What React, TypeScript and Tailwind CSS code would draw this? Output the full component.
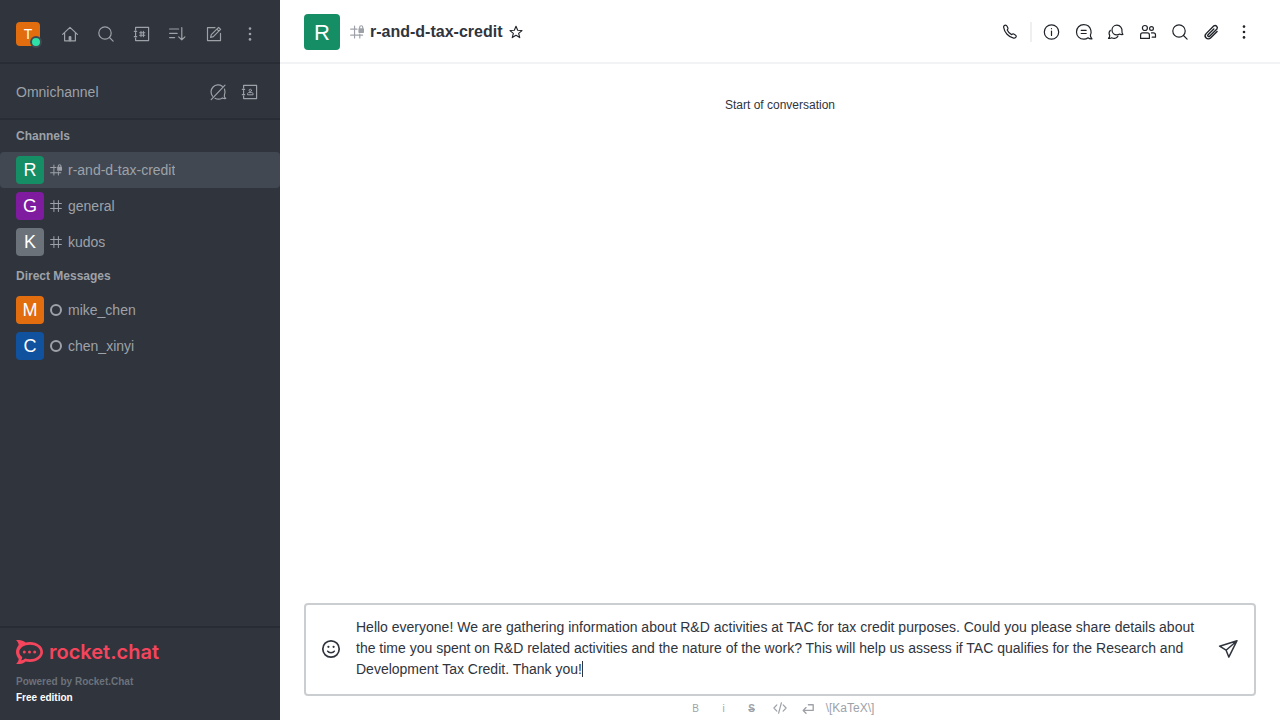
import React, { useEffect, useRef, useState } from 'react';
import type { ReactNode } from 'react';

function Icon({ children, className = 'size-5', width = 1.2 }: { children: ReactNode; className?: string; width?: number }) {
  return (
    <svg
      viewBox="0 0 20 20"
      className={className}
      fill="none"
      stroke="currentColor"
      strokeWidth={width}
      strokeLinecap="round"
      strokeLinejoin="round"
      aria-hidden="true"
    >
      {children}
    </svg>
  );
}

const LogoMark = () => (
  <svg viewBox="0 0 27 24" className="h-6 w-[27px]" fill="currentColor" aria-hidden="true">
    <path
      fillRule="evenodd"
      d="M0 .3C3.400-.5 7 .3 9.600 2.600c1.300-.3 2.800-.5 4.300-.5C21.300 2.100 27 6.500 27 12s-5.700 9.900-13.100 9.900c-1.500 0-3-.2-4.300-.5C7.200 23.700 3.600 24.600 0 23.800c1.900-1.600 2.800-3.300 2.600-5C1 16.900 0 14.600 0 12.100c0-2.600 1-4.900 2.600-6.800C2.800 3.600 1.900 1.900 0 .3ZM13.900 4.800C8 4.800 3.300 8 3.300 12c0 2 1.100 3.800 3 5.100-.1 1.200-.4 2.400-1.100 3.500 1.500-.5 2.900-1.300 3.900-2.200 1.500.5 3.100.8 4.800.8 5.800 0 10.400-3.200 10.400-7.200S19.700 4.800 13.900 4.800Z"
    />
    <circle cx="8.300" cy="12" r="1.500" />
    <circle cx="13.500" cy="12" r="1.500" />
    <circle cx="18.700" cy="12" r="1.500" />
  </svg>
);

const HomeIcon = () => (
  <Icon>
    <path d="M2.6 10.4 10 3.4l7.4 7M4.6 8.8v8h10.8v-8" />
    <path d="M9 16.5v-4h2v4z" fill="currentColor" strokeWidth="0.8" />
  </Icon>
);

const SearchIcon = () => (
  <Icon>
    <circle cx="9" cy="9" r="6.2" />
    <path d="m13.5 13.5 3.6 3.6" />
  </Icon>
);

const DirectoryIcon = () => (
  <Icon>
    <path d="M3.6 6V3.4h13v13.2h-13V14M3.6 8.6v2.8M2.3 7.3h2.4M2.3 12.7h2.4" />
    <path d="M9 7.4v5.2M11.4 7.4v5.2M7.6 8.8h5.2M7.6 11.2h5.2" strokeWidth="1.1" />
  </Icon>
);

const ContactsIcon = () => (
  <Icon>
    <path d="M3.6 6V3.4h13v13.2h-13V14M3.6 8.6v2.8M2.3 7.3h2.4M2.3 12.7h2.4" />
    <circle cx="10.3" cy="8.4" r="1.2" strokeWidth="1" />
    <path d="M7.5 12.4v-.6c0-.9.8-1.200 1.400-1.200h2.800c.8 0 1.400.4 1.400 1.200v.6z" strokeWidth="1" />
  </Icon>
);

const SortIcon = () => (
  <Icon>
    <path d="M1.6 5h9M1.6 9.3h7.6M1.6 13.6h5M13.8 3.6v12.2M10.7 12.8l3.1 3.1 3.1-3.1" />
  </Icon>
);

const EditIcon = () => (
  <Icon>
    <path d="M11 3.6H3.5v13h13V9.4" />
    <path d="m6.6 13.4.7-2.800 7.300-7.200 2 2-7.300 7.300zM12.900 5.100l2 2" />
  </Icon>
);

const KebabIcon = () => (
  <Icon>
    <g fill="currentColor" stroke="none">
      <circle cx="10" cy="4.600" r="1.300" />
      <circle cx="10" cy="10" r="1.300" />
      <circle cx="10" cy="15.400" r="1.300" />
    </g>
  </Icon>
);

const OmnichannelOffIcon = () => (
  <Icon>
    <path d="M14.2 4.3A7 7 0 0 0 4.500 14.200M7 16.300c2.500 1.300 5.600.9 7.500-.4 1.100.7 2.200.8 3.200.6-1.200-1-1.700-2.300-1.300-3.500.9-2 .8-4.100.1-5.900M3.200 17.600 17 3.200" />
  </Icon>
);

const PhoneIcon = () => (
  <Icon>
    <path d="M3.600 5.200C3.400 4 4.500 3.200 5.500 3.200c.9 0 1.300.4 1.700 1.200l.7 1.500c.4.9-.3 1.500-.7 2.100.8 1.800 2.500 3.600 4.400 4.600.6-.5 1.300-1 2.100-.6l1.600.9c.8.5 1.300 1 .9 1.900-.4.9-1.400 1.500-2.600 1.300C8.700 15.200 4.300 10.400 3.600 5.200Z" />
  </Icon>
);

const InfoIcon = () => (
  <Icon>
    <circle cx="9.500" cy="10" r="7.200" />
    <path d="M9.500 9v4.400M9.500 6.500v.2" />
  </Icon>
);

const DiscussionIcon = () => (
  <Icon>
    <path d="M16.400 13c.7-1.600.9-3.200.5-4.700C16.100 5 13.200 2.700 9.700 2.700 5.600 2.700 2.500 5.800 2.500 9.900c0 4.200 3.200 7.300 7.300 7.300 1.700 0 3.100-.5 4.200-1.400 1.200.9 2.600 1.200 4 1-.9-.9-1.900-2.300-1.600-3.800Z" />
    <path d="M7.200 8.300h5M7.200 11.500h5" />
  </Icon>
);

const ThreadsIcon = () => (
  <Icon>
    <path d="M16 9.200c.3-2.900-1.700-6-5.100-6C8 3.200 6 5.400 6 8.100c0 2.800 2.200 4.800 4.900 4.800 1.200 0 2-.3 2.800-.9.900.6 2 .8 3.200.5-.7-.8-1.100-1.900-.9-3.300Z" />
    <path d="M4.300 8.300c-1.400 1.500-1.500 3.500-.6 5.200.1 1.200-.4 2.200-1.200 2.800 1.200.3 2.300.1 3.200-.5 2.300 1.300 5.100.5 6.200-1.600" />
  </Icon>
);

const MembersIcon = () => (
  <Icon>
    <circle cx="6.900" cy="6" r="2.500" />
    <circle cx="13.500" cy="6.500" r="1.900" />
    <path d="M2.600 16.400v-3.500c0-1.300.8-2 2-2h4.800c1.200 0 2 .7 2 2v3.500zM13.500 10.900h1.900c1.400 0 2.100.8 2.100 2v2.300h-3.300" />
  </Icon>
);

const ClipIcon = () => (
  <Icon width={1.400}>
    <path transform="rotate(45 10 10)" d="M13.200 6v9.300a3.100 3.100 0 0 1-6.200 0V4.300a2.200 2.200 0 0 1 4.300 0v10.400a1.100 1.100 0 0 1-2.200 0V6.500" />
  </Icon>
);

const StarIcon = () => (
  <Icon className="size-4" width={1.400}>
    <path d="m10 2.800 2.100 5 5.400.4-4.200 3.500 1.400 5.300-4.700-2.900L5.300 17l1.400-5.300-4.200-3.500 5.400-.4z" />
  </Icon>
);

const EmojiIcon = () => (
  <Icon width={1.700}>
    <circle cx="10" cy="10" r="8.200" />
    <path d="M6.600 12.200c1.300 2 5.500 2 6.800 0" strokeWidth="1.500" />
    <circle cx="7.400" cy="7.800" r="1.100" fill="currentColor" stroke="none" />
    <circle cx="12.600" cy="7.800" r="1.100" fill="currentColor" stroke="none" />
  </Icon>
);

const SendIcon = () => (
  <Icon width={1.500}>
    <path d="M1.600 7.200 19 1.700l-8.200 16.400-2.700-6.900zM8.100 11.200 19 1.700" />
  </Icon>
);

const HashIcon = ({ className }: { className: string }) => (
  <Icon className={className} width={1.700}>
    <path d="M6.500 1v18M14 1v18M1 6h18M1 14h18" />
  </Icon>
);

const HashLockIcon = ({ className }: { className: string }) => (
  <Icon className={className} width={1.700}>
    <path d="M6.500 1.500v17M14 13v5.500M1 6h9M1 14.500h17" />
    <path d="M13.800 5V3.200c0-2.800 4.400-2.800 4.400 0V5" />
    <rect x="12" y="4.500" width="8" height="6.800" rx="1" fill="currentColor" stroke="none" />
  </Icon>
);

const CodeIcon = () => (
  <Icon className="size-3.5" width={1.700}>
    <path d="M5.500 5.500 1.300 10l4.200 4.500M14.500 5.500l4.200 4.500-4.200 4.500M12 2.500 8 17.500" />
  </Icon>
);

const ReturnIcon = () => (
  <Icon className="size-4" width={1.700}>
    <path d="M10.500 6h6v7H4M7.500 9.500 4 13l3.500 3.500" />
  </Icon>
);

function IconButton({ label, children }: { label: string; children: ReactNode }) {
  return (
    <button type="button" aria-label={label} className="flex size-7 shrink-0 items-center justify-center">
      {children}
    </button>
  );
}

function Row({ letter, color, name, icon, selected = false }: { letter: string; color: string; name: string; icon: ReactNode; selected?: boolean }) {
  return (
    <li>
      <a href="#" className={`flex h-9 items-center rounded-sm px-4 ${selected ? 'bg-[#414852]' : ''}`}>
        <span className={`flex size-7 items-center justify-center rounded-sm text-lg text-white ${color}`}>{letter}</span>
        <span className="mx-1.5 flex w-3 justify-center">{icon}</span>
        <span className="truncate text-sm">{name}</span>
      </a>
    </li>
  );
}

const Offline = () => <span className="size-3 rounded-full border-2 border-[#9ea2a8]" />;

function Sidebar() {
  return (
    <aside className="flex w-[280px] shrink-0 flex-col bg-[#2f343d] text-[#9ea2a8]">
      <div className="flex h-16 items-center gap-2 border-b-2 border-[#282c34] px-4 pt-1.5">
        <button type="button" aria-label="User menu" className="relative mr-2 flex size-6 items-center justify-center rounded-sm bg-[#e26d0e] text-sm text-white">
          T
          <span className="absolute -right-0.5 -bottom-0.5 box-content size-2 rounded-full border-2 border-[#414852] bg-[#2de0a5]" />
        </button>
        <IconButton label="Home"><HomeIcon /></IconButton>
        <IconButton label="Search"><SearchIcon /></IconButton>
        <IconButton label="Directory"><DirectoryIcon /></IconButton>
        <IconButton label="Display"><SortIcon /></IconButton>
        <IconButton label="Create new"><EditIcon /></IconButton>
        <IconButton label="Administration"><KebabIcon /></IconButton>
      </div>
      <div className="flex h-14 items-center gap-1 border-b-2 border-[#282c34] px-4 pt-0.5">
        <span className="flex-1 text-sm">Omnichannel</span>
        <IconButton label="Turn on answer chats"><OmnichannelOffIcon /></IconButton>
        <IconButton label="Contact center"><ContactsIcon /></IconButton>
      </div>
      <nav className="flex-1">
        <h2 className="px-4 text-xs leading-8 font-bold">Channels</h2>
        <ul>
          <Row letter="R" color="bg-[#158d65]" name="r-and-d-tax-credit" icon={<HashLockIcon className="size-3" />} selected />
          <Row letter="G" color="bg-[#7f1b9f]" name="general" icon={<HashIcon className="size-3" />} />
          <Row letter="K" color="bg-[#6c727a]" name="kudos" icon={<HashIcon className="size-3" />} />
        </ul>
        <h2 className="px-4 text-xs leading-8 font-bold">Direct Messages</h2>
        <ul>
          <Row letter="M" color="bg-[#e26d0e]" name="mike_chen" icon={<Offline />} />
          <Row letter="C" color="bg-[#10529e]" name="chen_xinyi" icon={<Offline />} />
        </ul>
      </nav>
      <footer className="border-t-2 border-[#282c34] px-4 pt-3 pb-3.5 text-[10px] leading-4 font-bold">
        <a href="#" aria-label="rocket.chat" className="mb-2.5 flex h-6 items-center gap-1.5 text-[#f5455c]">
          <LogoMark />
          <span className="font-['Inter',sans-serif] text-xl leading-5 font-semibold">rocket.chat</span>
        </a>
        <p className="text-[#6c727a]">Powered by Rocket.Chat</p>
        <p className="text-white">Free edition</p>
      </footer>
    </aside>
  );
}

const draft =
  'Hello everyone! We are gathering information about R&D activities at TAC for tax credit purposes. Could you please share details about the time you spent on R&D related activities and the nature of the work? This will help us assess if TAC qualifies for the Research and Development Tax Credit. Thank you!';

function Composer() {
  const [text, setText] = useState(draft);
  const box = useRef<HTMLTextAreaElement>(null);

  useEffect(() => {
    box.current?.focus();
    box.current?.setSelectionRange(draft.length, draft.length);
  }, []);

  return (
    <div className="px-6">
      <div className="flex items-center rounded-sm border-2 border-[#cbced1] pt-3 pr-3 pb-3.5 pl-[11px]">
        <IconButton label="Emoji"><EmojiIcon /></IconButton>
        <div className="relative mr-2 ml-[11px] flex flex-1 text-sm leading-[21px]">
          <textarea
            aria-label="Message"
            ref={box}
            rows={3}
            value={text}
            onChange={(e) => setText(e.target.value)}
            className="block w-full resize-none overflow-hidden caret-transparent outline-none"
          />
          <div aria-hidden="true" className="pointer-events-none absolute inset-0 whitespace-pre-wrap">
            <span className="invisible">{text}</span>
            <span className="absolute h-4 w-px translate-y-0.5 bg-[#2f343d]" />
          </div>
        </div>
        <IconButton label="Send"><SendIcon /></IconButton>
      </div>
      <div className="flex h-6 items-center justify-center pr-1 text-xs text-[#9ea2a8]">
        <button type="button" aria-label="Bold" className="flex h-6 w-7 items-center justify-center pt-0.5 text-[10px]">B</button>
        <button type="button" aria-label="Italic" className="flex h-6 w-7 items-center justify-center pt-0.5 text-[10px]">i</button>
        <button type="button" aria-label="Strike" className="flex h-6 w-7 items-center justify-center pt-0.5 text-[10px] font-bold line-through">S</button>
        <button type="button" aria-label="Inline code" className="flex h-6 w-7 items-center justify-center"><CodeIcon /></button>
        <button type="button" aria-label="Multi line" className="flex h-6 w-7 items-center justify-center"><ReturnIcon /></button>
        <a href="#" className="ml-1">{'\\[KaTeX\\]'}</a>
      </div>
    </div>
  );
}

export default function App() {
  return (
    <div className="flex h-screen bg-white font-['Liberation_Sans',Arial,sans-serif] text-[#2f343d]">
      <Sidebar />
      <main className="flex min-w-0 flex-1 flex-col">
        <header className="flex h-16 items-center border-b-2 border-[#f2f3f5] pt-0.5 pr-[22px] pl-6">
          <span className="flex size-9 items-center justify-center rounded-sm bg-[#158d65] text-[22px] text-white">R</span>
          <span className="ml-2.5 text-[#9ea2a8]"><HashLockIcon className="size-3.5" /></span>
          <h1 className="ml-1.5 text-base font-bold">r-and-d-tax-credit</h1>
          <button type="button" aria-label="Favorite" className="ml-1.5 text-[#1f2329]"><StarIcon /></button>
          <div className="ml-auto flex items-center gap-1 text-[#1f2329]">
            <IconButton label="Call"><PhoneIcon /></IconButton>
            <span className="mx-0.5 h-5 w-0.5 bg-[#eeeff1]" />
            <IconButton label="Room information"><InfoIcon /></IconButton>
            <IconButton label="Threads"><DiscussionIcon /></IconButton>
            <IconButton label="Discussion"><ThreadsIcon /></IconButton>
            <IconButton label="Members"><MembersIcon /></IconButton>
            <IconButton label="Search messages"><SearchIcon /></IconButton>
            <IconButton label="Files"><ClipIcon /></IconButton>
            <IconButton label="Options"><KebabIcon /></IconButton>
          </div>
        </header>
        <section className="flex-1 pt-8 text-center text-xs leading-[18px]">Start of conversation</section>
        <Composer />
      </main>
    </div>
  );
}
